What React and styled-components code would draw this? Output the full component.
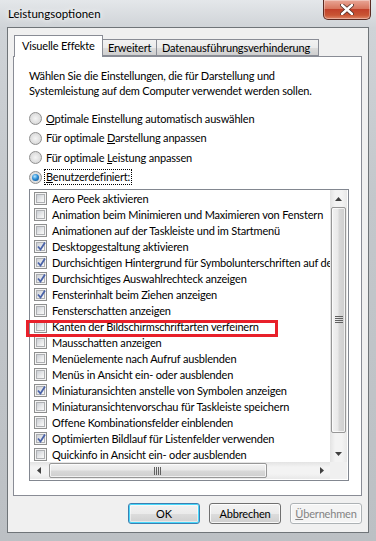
import styled, { createGlobalStyle } from "styled-components";

const Global = createGlobalStyle`
  html, body {
    margin: 0;
    padding: 0;
    background: #c4c8cc;
  }
  * {
    box-sizing: border-box;
  }
`;

const Window = styled.div`
  width: 376px;
  height: 541px;
  display: flex;
  flex-direction: column;
  background: linear-gradient(180deg, #e4e7ea 0px, #cfd3d7 28px, #c3c7cb 200px, #bcc0c4 541px);
  font-family: Lato, "Liberation Sans", sans-serif;
  font-size: 11px;
  letter-spacing: -0.17px;
  color: #000;
  position: relative;
  overflow: hidden;
`;

const TitleBar = styled.div`
  height: 28px;
  display: flex;
  align-items: flex-start;
  padding-right: 5px;
`;

const Title = styled.div`
  padding: 7px 0 0 8px;
  font-size: 11.5px;
  letter-spacing: 0;
  color: #000;
  text-shadow: 0 0 8px #fff, 0 0 4px #fff;
`;

const CloseButton = styled.div`
  margin-left: auto;
  width: 48px;
  height: 20px;
  border: 1px solid #5b2a22;
  border-top: none;
  border-radius: 0 0 5px 5px;
  background: linear-gradient(180deg, #e9a797 0%, #d8765e 45%, #c2412a 50%, #c95534 80%, #e0886a 100%);
  box-shadow: inset 0 0 0 1px rgba(255, 255, 255, 0.35);
  display: flex;
  align-items: center;
  justify-content: center;
`;

const Client = styled.div`
  flex: 1;
  margin: 0 7px 8px 7px;
  border: 1px solid #6f7478;
  background: #f0f0f0;
  display: flex;
  flex-direction: column;
  padding: 7px 6px 8px 5px;
`;

const TabStrip = styled.div`
  height: 21px;
  display: flex;
  align-items: flex-end;
  padding-left: 1px;
  position: relative;
  z-index: 1;
`;

const Tab = styled.div`
  height: ${(p) => (p.$active ? "22px" : "17px")};
  margin-bottom: ${(p) => (p.$active ? "-1px" : "0")};
  border: 1px solid #898c95;
  border-bottom: ${(p) => (p.$active ? "none" : "1px solid #898c95")};
  margin-left: ${(p) => (p.$active ? "0" : "-1px")};
  background: ${(p) =>
    p.$active ? "#fff" : "linear-gradient(180deg, #f2f2f2 0%, #ebebeb 50%, #dddddd 51%, #cfcfcf 100%)"};
  padding: ${(p) => (p.$active ? "3px 7px 0 7px" : "1px 5px 0 5px")};
  width: ${(p) => p.$w}px;
  white-space: nowrap;
  line-height: 14px;
`;

const Panel = styled.div`
  height: 440px;
  border: 1px solid #898c95;
  background: #fff;
  padding: 11px 13px 0 15px;
  display: flex;
  flex-direction: column;
`;

const Intro = styled.p`
  margin: 0;
  line-height: 15px;
`;

const RadioGroup = styled.div`
  margin-top: 11px;
  display: flex;
  flex-direction: column;
`;

const RadioRow = styled.div`
  height: 19.5px;
  display: flex;
  align-items: center;
  gap: 3px;
`;

const RadioDot = styled.span`
  width: 13px;
  height: 13px;
  border-radius: 50%;
  border: 1px solid #8f8f8f;
  background: radial-gradient(circle at 50% 50%, #f5f5f5 0%, #e4e4e4 45%, #cfcfcf 100%);
  display: flex;
  align-items: center;
  justify-content: center;
  &::after {
    content: "";
    display: ${(p) => (p.$on ? "block" : "none")};
    width: 7px;
    height: 7px;
    border-radius: 50%;
    background: radial-gradient(circle at 40% 35%, #b9e6ff 0%, #2c8fd6 45%, #0b3f7e 100%);
  }
`;

const RadioLabel = styled.span`
  line-height: 14px;
  outline: ${(p) => (p.$focus ? "1px dotted #000" : "none")};
  outline-offset: 0;
  padding: 0 1px;
`;

const Key = styled.span`
  text-decoration: underline;
`;

const ListBox = styled.div`
  margin-top: 2px;
  width: 320px;
  height: 292px;
  border: 1px solid #828790;
  display: grid;
  grid-template-columns: 300px 17px;
  grid-template-rows: 272px 17px;
`;

const Items = styled.div`
  overflow: hidden;
  display: flex;
  flex-direction: column;
`;

const Item = styled.div`
  height: 16px;
  flex: 0 0 16px;
  display: flex;
  align-items: center;
  padding-left: 4px;
  gap: 5px;
  white-space: nowrap;
`;

const Box = styled.span`
  flex: 0 0 13px;
  width: 13px;
  height: 13px;
  border: 1px solid #8e8f8f;
  background: #f4f4f4;
  padding: 1px;
  display: flex;
  position: relative;
  &::before {
    content: "";
    flex: 1;
    border: 1px solid #aeb0b3;
    background: linear-gradient(135deg, #cbcfd5 0%, #eaebec 60%, #fafafa 100%);
  }
`;

const Check = styled.svg`
  position: absolute;
  left: 1px;
  top: 0px;
`;

const VScroll = styled.div`
  background: linear-gradient(90deg, #e3e3e3 0%, #f3f3f3 30%, #f3f3f3 70%, #e8e8e8 100%);
  display: flex;
  flex-direction: column;
  align-items: stretch;
`;

const HScroll = styled.div`
  background: linear-gradient(180deg, #e3e3e3 0%, #f3f3f3 30%, #f3f3f3 70%, #e8e8e8 100%);
  display: flex;
  align-items: stretch;
`;

const Arrow = styled.div`
  flex: 0 0 17px;
  display: flex;
  align-items: center;
  justify-content: center;
`;

const Thumb = styled.div`
  border: 1px solid #979797;
  border-radius: 2px;
  background: ${(p) =>
    p.$vertical
      ? "linear-gradient(90deg, #f3f3f3 0%, #e9e9e9 45%, #d8d8d8 55%, #cecece 100%)"
      : "linear-gradient(180deg, #f3f3f3 0%, #e9e9e9 45%, #d8d8d8 55%, #cecece 100%)"};
  box-shadow: inset 0 0 0 1px rgba(255, 255, 255, 0.7);
  display: flex;
  align-items: center;
  justify-content: center;
  ${(p) => (p.$vertical ? "margin: 0 1px; height: 226px;" : "margin: 1px 0 1px 2px; width: 218px;")}
`;

const Track = styled.div`
  flex: 1;
`;

const Corner = styled.div`
  background: #f0f0f0;
`;

const Footer = styled.div`
  margin-top: 7px;
  display: flex;
  justify-content: flex-end;
  gap: 9px;
`;

const Button = styled.div`
  width: 72px;
  height: 21px;
  border-radius: 3px;
  border: 1px solid ${(p) => (p.$default ? "#3c7fb1" : p.$disabled ? "#adb2b5" : "#707070")};
  background: ${(p) =>
    p.$disabled
      ? "#f4f4f4"
      : "linear-gradient(180deg, #f2f2f2 0%, #ebebeb 50%, #dddddd 51%, #cfcfcf 100%)"};
  box-shadow: ${(p) =>
    p.$default
      ? "inset 0 0 0 1px #48d8fb, inset 0 0 0 2px rgba(255,255,255,0.5)"
      : "inset 0 0 0 1px rgba(255,255,255,0.8)"};
  color: ${(p) => (p.$disabled ? "#838383" : "#000")};
  display: flex;
  align-items: center;
  justify-content: center;
`;

const Highlight = styled.div`
  position: absolute;
  left: 26px;
  top: 320px;
  width: 252px;
  height: 17px;
  border: 3px solid #e8202a;
  pointer-events: none;
`;

const items = [
  ["Aero Peek aktivieren", false],
  ["Animation beim Minimieren und Maximieren von Fenstern", false],
  ["Animationen auf der Taskleiste und im Startmenü", false],
  ["Desktopgestaltung aktivieren", true],
  ["Durchsichtigen Hintergrund für Symbolunterschriften auf dem Desktop", true],
  ["Durchsichtiges Auswahlrechteck anzeigen", true],
  ["Fensterinhalt beim Ziehen anzeigen", true],
  ["Fensterschatten anzeigen", false],
  ["Kanten der Bildschirmschriftarten verfeinern", false],
  ["Mausschatten anzeigen", false],
  ["Menüelemente nach Aufruf ausblenden", false],
  ["Menüs in Ansicht ein- oder ausblenden", false],
  ["Miniaturansichten anstelle von Symbolen anzeigen", true],
  ["Miniaturansichtenvorschau für Taskleiste speichern", false],
  ["Offene Kombinationsfelder einblenden", false],
  ["Optimierten Bildlauf für Listenfelder verwenden", true],
  ["Quickinfo in Ansicht ein- oder ausblenden", false],
];

const Tri = ({ dir }) => {
  const pts = {
    up: "0,4 3.5,0 7,4",
    down: "0,0 3.5,4 7,0",
    left: "4,0 0,3.5 4,7",
    right: "0,0 4,3.5 0,7",
  }[dir];
  const vertical = dir === "up" || dir === "down";
  return (
    <svg width={vertical ? 7 : 4} height={vertical ? 4 : 7}>
      <polygon points={pts} fill="#404040" />
    </svg>
  );
};

const Grip = ({ vertical }) =>
  vertical ? (
    <svg width="8" height="8">
      {[0, 2, 4, 6].map((y) => (
        <rect key={y} x="0" y={y} width="8" height="1" fill="#606060" />
      ))}
    </svg>
  ) : (
    <svg width="8" height="8">
      {[0, 2, 4, 6].map((x) => (
        <rect key={x} x={x} y="0" width="1" height="8" fill="#606060" />
      ))}
    </svg>
  );

export default function App() {
  return (
    <>
      <Global />
      <Window>
        <TitleBar>
          <Title>Leistungsoptionen</Title>
          <CloseButton>
            <svg width="14" height="11" viewBox="0 0 14 11">
              <path
                d="M2 1 L12 10 M12 1 L2 10"
                stroke="#4a2a24"
                strokeWidth="4"
                strokeLinecap="round"
              />
              <path
                d="M2 1 L12 10 M12 1 L2 10"
                stroke="#fff"
                strokeWidth="2.4"
                strokeLinecap="round"
              />
            </svg>
          </CloseButton>
        </TitleBar>
        <Client>
          <TabStrip>
            <Tab $active $w={89}>Visuelle Effekte</Tab>
            <Tab $w={55}>Erweitert</Tab>
            <Tab $w={163}>Datenausführungsverhinderung</Tab>
          </TabStrip>
          <Panel>
            <Intro>
              Wählen Sie die Einstellungen, die für Darstellung und
              <br />
              Systemleistung auf dem Computer verwendet werden sollen.
            </Intro>
            <RadioGroup>
              <RadioRow>
                <RadioDot />
                <RadioLabel>
                  <Key>O</Key>ptimale Einstellung automatisch auswählen
                </RadioLabel>
              </RadioRow>
              <RadioRow>
                <RadioDot />
                <RadioLabel>
                  Für optimale <Key>D</Key>arstellung anpassen
                </RadioLabel>
              </RadioRow>
              <RadioRow>
                <RadioDot />
                <RadioLabel>
                  Für optimale <Key>L</Key>eistung anpassen
                </RadioLabel>
              </RadioRow>
              <RadioRow>
                <RadioDot $on />
                <RadioLabel $focus>
                  <Key>B</Key>enutzerdefiniert:
                </RadioLabel>
              </RadioRow>
            </RadioGroup>
            <ListBox>
              <Items>
                {items.map(([label, on]) => (
                  <Item key={label}>
                    <Box>
                      {on && (
                        <Check width="11" height="11" viewBox="0 0 11 11">
                          <path
                            d="M2 5.5 L4.5 8.5 L9 1.5"
                            stroke="#4a63a8"
                            strokeWidth="1.8"
                            fill="none"
                          />
                        </Check>
                      )}
                    </Box>
                    {label}
                  </Item>
                ))}
              </Items>
              <VScroll>
                <Arrow>
                  <Tri dir="up" />
                </Arrow>
                <Thumb $vertical>
                  <Grip vertical />
                </Thumb>
                <Track />
                <Arrow>
                  <Tri dir="down" />
                </Arrow>
              </VScroll>
              <HScroll>
                <Arrow>
                  <Tri dir="left" />
                </Arrow>
                <Thumb>
                  <Grip />
                </Thumb>
                <Track />
                <Arrow>
                  <Tri dir="right" />
                </Arrow>
              </HScroll>
              <Corner />
            </ListBox>
          </Panel>
          <Footer>
            <Button $default>OK</Button>
            <Button>Abbrechen</Button>
            <Button $disabled>
              <Key>Ü</Key>bernehmen
            </Button>
          </Footer>
        </Client>
        <Highlight />
      </Window>
    </>
  );
}
